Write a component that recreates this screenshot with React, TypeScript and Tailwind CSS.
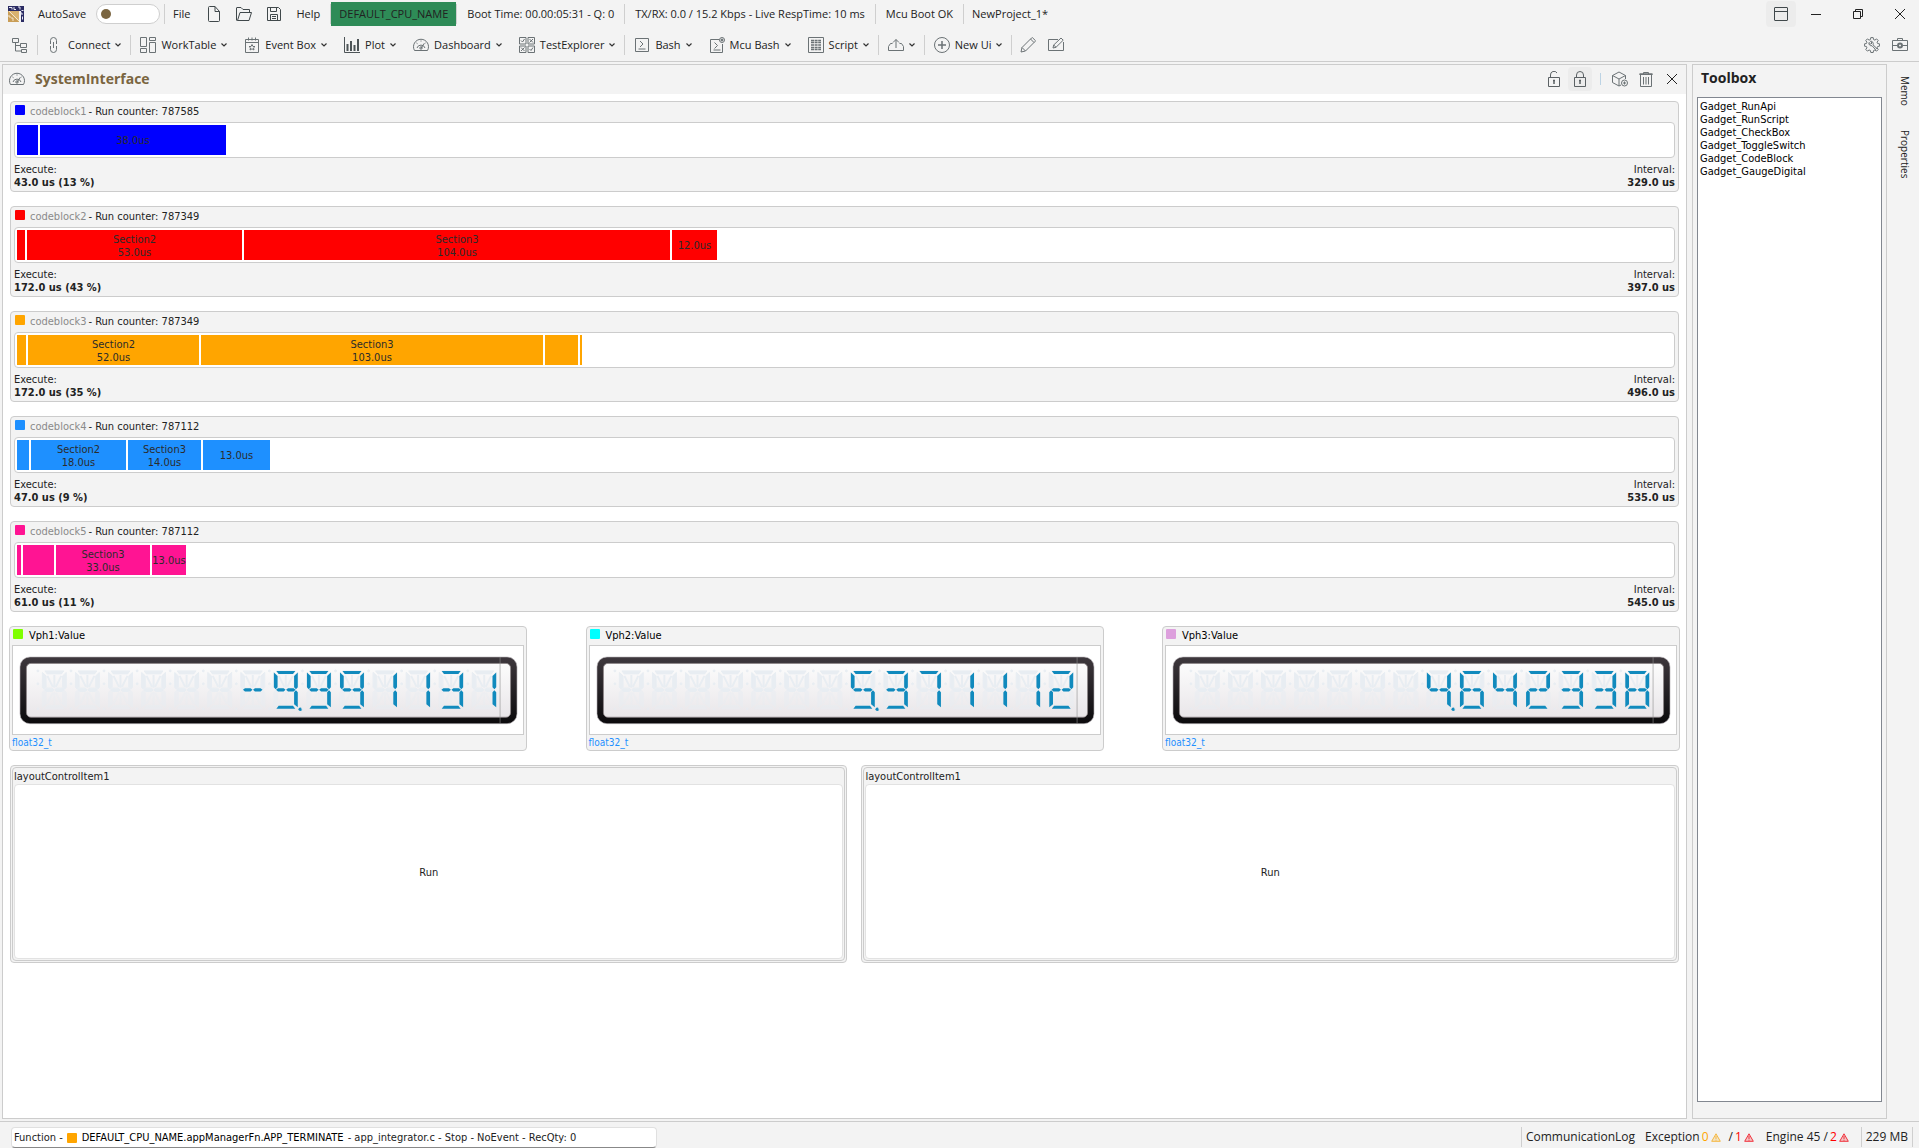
import React from 'react';

interface Section {
    span: number;
    name?: string;
    time?: string;
}

interface CodeBlock {
    name: string;
    counter: number;
    fill: string;
    execute: string;
    interval: string;
    sections: Section[];
}

interface GaugeData {
    name: string;
    fill: string;
    value: string;
}

const TRACK_SPAN = 1655;

const CODE_BLOCKS: CodeBlock[] = [
    {
        name: 'codeblock1', counter: 787585, fill: 'bg-[#0000ff]', execute: '43.0 us (13 %)', interval: '329.0 us',
        sections: [{ span: 21 }, { span: 186, time: '38.0us' }],
    },
    {
        name: 'codeblock2', counter: 787349, fill: 'bg-[#ff0000]', execute: '172.0 us (43 %)', interval: '397.0 us',
        sections: [{ span: 8 }, { span: 215, name: 'Section2', time: '53.0us' }, { span: 426, name: 'Section3', time: '104.0us' }, { span: 45, time: '12.0us' }],
    },
    {
        name: 'codeblock3', counter: 787349, fill: 'bg-[#ffa500]', execute: '172.0 us (35 %)', interval: '496.0 us',
        sections: [{ span: 9 }, { span: 171, name: 'Section2', time: '52.0us' }, { span: 342, name: 'Section3', time: '103.0us' }, { span: 33 }, { span: 2 }],
    },
    {
        name: 'codeblock4', counter: 787112, fill: 'bg-[#1e90ff]', execute: '47.0 us (9 %)', interval: '535.0 us',
        sections: [{ span: 12 }, { span: 95, name: 'Section2', time: '18.0us' }, { span: 73, name: 'Section3', time: '14.0us' }, { span: 67, time: '13.0us' }],
    },
    {
        name: 'codeblock5', counter: 787112, fill: 'bg-[#ff1493]', execute: '61.0 us (11 %)', interval: '545.0 us',
        sections: [{ span: 4 }, { span: 31 }, { span: 94, name: 'Section3', time: '33.0us' }, { span: 34, time: '13.0us' }],
    },
];

const GAUGES: GaugeData[] = [
    { name: 'Vph1:Value', fill: 'bg-[#7fff00]', value: '-9.991131' },
    { name: 'Vph2:Value', fill: 'bg-[#00ffff]', value: '5.371112' },
    { name: 'Vph3:Value', fill: 'bg-[#dda0dd]', value: '4.642338' },
];

const GADGETS = ['Gadget_RunApi', 'Gadget_RunScript', 'Gadget_CheckBox', 'Gadget_ToggleSwitch', 'Gadget_CodeBlock', 'Gadget_GaugeDigital'];

/* ---------- icons ---------- */

const Icon: React.FC<{ children: React.ReactNode; className?: string }> = ({ children, className = 'text-[#6b7275]' }) => (
    <svg viewBox="0 0 16 16" className={`size-4 shrink-0 ${className}`} fill="none" stroke="currentColor" strokeWidth="1" aria-hidden="true">
        {children}
    </svg>
);

const Logo = () => (
    <svg viewBox="0 0 16 16" className="size-4 shrink-0" aria-hidden="true">
        <path d="M0 0h16v16h-3V5H0z" fill="#2a2b63" />
        <path d="M0 5h11v11H0z" fill="#d9b26f" />
        <path d="M0 5l11 11H0z" fill="#c99d56" />
        <path d="M1 5l10 10M3 12h2v3M1 9v2h2" stroke="#f3e6cc" fill="none" />
        <path d="M1 1.500h3v2M6 1v2.500h2M10 1h2v2.500M13.500 4.500h2M12 7h2v2M14.500 10.500v3" stroke="#e8e8f4" fill="none" />
    </svg>
);

const TreeIcon = () => (
    <Icon><path d="M.5 1.500h6v4h-6zM8.500 6.500h6v4h-6zM9.500 12.500h5v3h-5zM3.500 5.500v8.500h6M3.500 8.500h5" /></Icon>
);
const LinkIcon = () => (
    <Icon><path d="M3.500 6V3.500a3 3 0 016 0V6M3.500 10v2.500a3 3 0 006 0V10M6.500 5v6M3.500 6v1M9.500 6v1M3.500 9v1M9.500 9v1" /></Icon>
);
const WorkTableIcon = () => (
    <Icon><path d="M.5.5h6v9h-6zM.5 11.500h6v4h-6zM9.500.5h6v3h-6zM9.500 5.500h6v10h-6z" /></Icon>
);
const EventIcon = () => (
    <Icon>
        <path d="M1.500 2.500h13v13h-13zM1.500 5.500h13M4.500.5v3M8 .5v3M11.500.5v3" />
        <path d="M8 7.500l1 2h2l-1.500 1.400.5 2.100-2-1.200L6 13l.5-2.100L5 9.500h2z" />
    </Icon>
);
const PlotIcon = () => (
    <Icon className="text-[#4d5457]">
        <path d="M.5 0v15.500H16" />
        <path d="M3.500 7v7M7 4v10M10.500 8v6M14 2v12" strokeWidth="2" />
    </Icon>
);
const GaugeIcon = () => (
    <Icon>
        <path d="M1.500 13.500a7.500 7.500 0 1113 0zM4 11a4.200 4.200 0 018 0M8 11.500l3-5" />
        <circle cx="8" cy="11" r="1.200" />
        <path d="M8 3.500v1M3.500 6l1 .7M12.500 6l-1 .7" />
    </Icon>
);
const TestIcon = () => (
    <Icon>
        <path d="M.5.5h6.500v6.500H.5zM9 .5h6.500v6.500H9zM.5 9h6.500v6.500H.5zM9 9h6.500v6.500H9z" />
        <path d="M2 3.500l1.500 1.500 2-3M10.500 2l3.500 3.500M14 2l-3.500 3.500M2 10.500L5.500 14M5.500 10.500L2 14M10.500 12l1.500 1.500 2-3" />
    </Icon>
);
const BashIcon = () => (
    <Icon><path d="M1.500 1.500h13v13h-13zM6 4l3 3-3 3M4.500 12h7" /></Icon>
);
const McuBashIcon = () => (
    <Icon>
        <path d="M10 2.500H1.500v13h12V7M5.500 5.500l3 3-3 3M4.500 13h7" />
        <circle cx="13" cy="3" r="2.500" />
        <circle cx="13" cy="3" r="1" fill="currentColor" />
    </Icon>
);
const ScriptIcon = () => (
    <Icon>
        <path d="M.5.5h15v15H.5z" />
        <path d="M3 3.500h10M3 5.500h10M3 8h10M3 10.500h10M3 12.500h10" strokeWidth="1.500" strokeDasharray="3 .6" />
    </Icon>
);
const ShareIcon = () => (
    <Icon><path d="M4.500 6.500H2.500l-2 3v4h15v-4l-2-3h-2M8 11V2.500M5 5.500l3-3 3 3" /></Icon>
);
const PlusIcon = () => (
    <Icon>
        <circle cx="8" cy="8" r="7.500" />
        <path d="M8 4v8M4 8h8" strokeWidth="1.500" />
    </Icon>
);
const PencilIcon = () => (
    <Icon><path d="M1 15l1-4.500L11.500 1l.8-.5 3.200 3.200-.5.800L5.500 14zM2 10.500L5.500 14M10.500 2l3.500 3.500" /></Icon>
);
const EditIcon = () => (
    <Icon><path d="M10 2.500H.5v11h15V5M5 11l.7-3L13 1l2.200 2.200L8 10.300zM5.700 8L8 10.300" /></Icon>
);
const GearIcon = () => (
    <Icon>
        <path d="M6.800.6h2.400l.4 2 1.300.5 1.700-1.200 1.600 1.600-1.100 1.700.5 1.300 2 .4v2.200l-2 .4-.5 1.300 1.100 1.700-1.600 1.600-1.700-1.100-1.300.5-.4 2H6.800l-.4-2-1.300-.5-1.700 1.100-1.600-1.600 1.100-1.700-.5-1.300-2-.4V6.900l2-.4.5-1.300-1.100-1.700 1.600-1.600 1.700 1.200 1.300-.5z" />
        <path d="M5 5.500a2.500 2.500 0 003 3.200l3.500 3.800 1.200-1.200L9 7.800a2.500 2.500 0 00-2.500-3.600L8 6 6.800 7.200z" />
    </Icon>
);
const CameraIcon = () => (
    <Icon>
        <path d="M.5 3.500h15v10H.5zM5.500 3.500v-2h5v2M.5 8.500h4.500M11 8.500h4.500" />
        <circle cx="8" cy="8.500" r="2" strokeWidth="2" />
    </Icon>
);
const FileIcon = () => (
    <Icon className="text-[#40484b]"><path d="M2.500 1.500a1 1 0 011-1H9l4.500 5v9a1 1 0 01-1 1h-9a1 1 0 01-1-1zM9 .5v5h4.500" /></Icon>
);
const FolderIcon = () => (
    <Icon className="text-[#40484b]"><path d="M1.500 14.500l2.500-8h11.500l-2.500 8zM1.500 14.500H1a.5.500 0 01-.5-.5V2a.5.500 0 01.5-.5h4l2 2h6.500v3" /></Icon>
);
const SaveIcon = () => (
    <Icon className="text-[#40484b]"><path d="M1.500 1.500h11l2 2v11h-13zM4.500 1.500v4h6v-4M4.500 14.500v-6h7v6M6 10.500h4M6 12.500h4" /></Icon>
);
const UnlockIcon = () => (
    <Icon className="text-[#5b6164]">
        <path d="M2.500 6.500h11v9h-11zM4.500 6.500V4a3.500 3.500 0 016.500-2" />
        <path d="M8 9v4M7 9.500h2" strokeWidth="1.500" />
    </Icon>
);
const LockIcon = () => (
    <Icon className="text-[#5b6164]">
        <path d="M2.500 6.500h11v9h-11zM4.500 6.500V4a3.500 3.500 0 017 0v2.500" />
        <path d="M8 9v4M7 9.500h2" strokeWidth="1.500" />
    </Icon>
);
const BoxIcon = () => (
    <Icon>
        <path d="M9 14l-2 1-6.500-3.500v-7L7 1l6.500 3.500V8M.5 4.500L7 8l6.500-3.500M7 8v7" />
        <circle cx="12.500" cy="12" r="3" />
        <path d="M12.500 10.500v3M11 12h3" />
    </Icon>
);
const TrashIcon = () => (
    <Icon>
        <path d="M1.500 3.500h13M5.500 3.500v-2h5v2M2.500 3.500v12h11v-12M5.500 6v7.500M8 6v7.500M10.500 6v7.500" />
        <path d="M1.500 3h13" strokeWidth="1.500" />
    </Icon>
);
const WindowIcon = () => (
    <Icon className="text-[#40484b]"><path d="M2 1.500h12a.5.500 0 01.5.5v12a.5.500 0 01-.5.500H2a.5.500 0 01-.5-.5V2a.5.500 0 01.5-.5zM1.500 5.500h13" /></Icon>
);
const MinimizeIcon = () => <Icon className="text-[#222]"><path d="M3 8.500h10" /></Icon>;
const RestoreIcon = () => (
    <Icon className="text-[#222]"><path d="M3.500 5.500h7v7h-7zM5.500 5.500v-2h7v7h-2" /></Icon>
);
const CloseIcon = () => <Icon className="text-[#222]"><path d="M3 3l10 10M13 3L3 13" /></Icon>;
const Chevron = () => (
    <svg viewBox="0 0 6 4" className="h-1 w-1.5 shrink-0 text-[#333]" fill="none" stroke="currentColor" strokeWidth="1.200" aria-hidden="true">
        <path d="M.5.500L3 3 5.500.5" />
    </svg>
);
const WarnIcon: React.FC<{ className: string }> = ({ className }) => (
    <svg viewBox="0 0 10 9" className={`h-[9px] w-2.5 shrink-0 ${className}`} fill="none" stroke="currentColor" aria-hidden="true">
        <path d="M5 .8L9.300 8.300H.7z" fill="currentColor" fillOpacity=".25" />
        <path d="M5 3v3M5 6.700v1" />
    </svg>
);

/* ---------- title bar and toolbar ---------- */

const Sep: React.FC = () => <span className="h-5 w-px shrink-0 bg-[#cfcfcf]" />;

const TitleBar: React.FC = () => (
    <header className="flex h-7 items-center pl-2">
        <Logo />
        <label htmlFor="autosave" className="ml-3.5">AutoSave</label>
        <input
            id="autosave"
            type="checkbox"
            role="switch"
            className="ml-2.5 flex h-5 w-16 shrink-0 appearance-none items-center rounded-full border border-[#cfcfcf] bg-white pl-1 before:size-2.5 before:rounded-full before:bg-[#7a6540] before:content-['']"
        />
        <div className="ml-1 flex items-center">
            <Sep />
            <button className="ml-2">File</button>
            <button aria-label="New" className="ml-4"><FileIcon /></button>
            <button aria-label="Open" className="ml-3.5"><FolderIcon /></button>
            <button aria-label="Save" className="ml-3.5"><SaveIcon /></button>
            <button className="mr-2.5 ml-3.5">Help</button>
            <Sep />
        </div>
        <span className="flex h-6 items-center bg-[#2e8b57] px-2">DEFAULT_CPU_NAME</span>
        <Sep />
        <span className="px-2.5">Boot Time: 00.00:05:31 - Q: 0</span>
        <Sep />
        <span className="px-2.5">TX/RX: 0.0 / 15.2 Kbps - Live RespTime: 10 ms</span>
        <Sep />
        <span className="px-2.5">Mcu Boot OK</span>
        <Sep />
        <span className="px-2">NewProject_1*</span>
        <div className="ml-auto flex items-center pr-[11px]">
            <button aria-label="Layout" className="mr-3 flex h-[26px] w-[30px] items-center justify-center rounded bg-[#ececec]"><WindowIcon /></button>
            <button aria-label="Minimize" className="mr-[26px]"><MinimizeIcon /></button>
            <button aria-label="Restore" className="mr-[26px]"><RestoreIcon /></button>
            <button aria-label="Close"><CloseIcon /></button>
        </div>
    </header>
);

const ToolButton: React.FC<{ icon: React.ReactNode; label?: string }> = ({ icon, label }) => (
    <button aria-label={label ? undefined : 'Share'} className="flex items-center">
        {icon}
        {label && <span className="ml-[5px]">{label}</span>}
        <span className="ml-[5px]"><Chevron /></span>
    </button>
);

const Group: React.FC<{ children: React.ReactNode }> = ({ children }) => (
    <div className="flex items-center gap-[17px] px-[9px]">{children}</div>
);

const Toolbar: React.FC = () => (
    <nav className="flex h-[34px] items-center border-b border-[#cccccc] pl-[3px]">
        <Group><button aria-label="Tree"><TreeIcon /></button></Group>
        <Sep />
        <Group><ToolButton icon={<LinkIcon />} label="Connect" /></Group>
        <Sep />
        <Group>
            <ToolButton icon={<WorkTableIcon />} label="WorkTable" />
            <ToolButton icon={<EventIcon />} label="Event Box" />
            <ToolButton icon={<PlotIcon />} label="Plot" />
            <ToolButton icon={<GaugeIcon />} label="Dashboard" />
            <ToolButton icon={<TestIcon />} label="TestExplorer" />
        </Group>
        <Sep />
        <Group>
            <ToolButton icon={<BashIcon />} label="Bash" />
            <ToolButton icon={<McuBashIcon />} label="Mcu Bash" />
            <ToolButton icon={<ScriptIcon />} label="Script" />
        </Group>
        <Sep />
        <Group><ToolButton icon={<ShareIcon />} /></Group>
        <Sep />
        <Group><ToolButton icon={<PlusIcon />} label="New Ui" /></Group>
        <Sep />
        <div className="flex items-center gap-3 pl-2">
            <button aria-label="Pencil"><PencilIcon /></button>
            <button aria-label="Edit"><EditIcon /></button>
        </div>
        <div className="ml-auto flex items-center gap-3 pr-[11px]">
            <button aria-label="Settings"><GearIcon /></button>
            <button aria-label="Snapshot"><CameraIcon /></button>
        </div>
    </nav>
);

/* ---------- dashboard ---------- */

const Swatch: React.FC<{ fill: string }> = ({ fill }) => <span className={`size-2.5 shrink-0 rounded-[1px] ${fill}`} />;

const CodeBlockCard: React.FC<{ block: CodeBlock }> = ({ block }) => (
    <section className="rounded border border-[#cccccc] bg-[#f3f3f3] px-[3px] pb-0.5">
        <div className="flex h-5 items-baseline pt-0.5 pl-px">
            <Swatch fill={block.fill} />
            <span className="ml-[5px] text-[#8a8a8a]">{block.name}</span>
            <span className="ml-0.5">- Run counter: {block.counter}</span>
        </div>
        <div className="flex h-9 gap-0.5 rounded border border-[#cccccc] bg-white px-0.5 py-0.5">
            {block.sections.map((section, index) => (
                <div
                    key={index}
                    className={`flex h-[30px] flex-col items-center justify-center overflow-hidden pt-px leading-[13px] whitespace-nowrap text-[#2b2b2b] ${block.fill}`}
                    style={{ width: `${(section.span / TRACK_SPAN) * 100}%` }}
                >
                    {section.name && <span>{section.name}</span>}
                    {section.time && <span>{section.time}</span>}
                </div>
            ))}
        </div>
        <div className="flex justify-between pt-[5px] leading-[13px]">
            <div>
                <div>Execute:</div>
                <div className="font-bold">{block.execute}</div>
            </div>
            <div className="text-right">
                <div>Interval:</div>
                <div className="font-bold">{block.interval}</div>
            </div>
        </div>
    </section>
);

/* seven-segment shapes on a 24 x 38 cell */
const SEGMENTS: Record<string, string> = {
    a: 'M2.500 0H21.500L19.200 3H4.800z',
    b: 'M24 1.500V16.500L22.200 18.500 20.300 16.500V5z',
    c: 'M22.200 19.500L24 21.500V36.500L20.300 33.500V21.500z',
    d: 'M4.800 35H19.200L21.500 38H2.500z',
    e: 'M1.800 19.500L3.700 21.500V33.500L0 36.500V21.500z',
    f: 'M0 1.500L3.700 5V16.500L1.800 18.500 0 16.500z',
    g: 'M2.200 19L4.200 17.300H9.800L11.700 19 9.800 20.700H4.200zM12.300 19L14.200 17.300H19.800L21.800 19 19.800 20.700H14.200z',
};

const DIGITS: Record<string, string> = {
    '-': 'g', '1': 'bc', '2': 'abged', '3': 'abgcd', '4': 'fgbc', '5': 'afgcd', '6': 'afgcde', '7': 'abc', '8': 'abcdefg', '9': 'abcdfg',
};

const CELLS = 14;
const PITCH = 33.2;

const GaugeDisplay: React.FC<{ id: string; value: string }> = ({ id, value }) => {
    const chars = value.replace('.', '').split('');
    const dotAfter = value.indexOf('.') - 1;
    const first = CELLS - chars.length;
    return (
        <svg viewBox="0 0 512 88" className="block w-full" role="img" aria-label={value}>
            <defs>
                <linearGradient id={`${id}-frame`} x1="0" y1="0" x2="0" y2="1">
                    <stop offset="0" stopColor="#3e383d" />
                    <stop offset="1" stopColor="#0b0a0c" />
                </linearGradient>
                <linearGradient id={`${id}-face`} x1="0" y1="0" x2="0" y2="1">
                    <stop offset="0" stopColor="#fcfcfc" />
                    <stop offset="1" stopColor="#e9e6e9" />
                </linearGradient>
            </defs>
            <rect x="7" y="11" width="499" height="67" rx="10" fill={`url(#${id}-frame)`} stroke="#bdb9bd" strokeWidth=".6" />
            <rect x="13.500" y="17.500" width="486" height="54" rx="4.500" fill={`url(#${id}-face)`} stroke="#8d8588" strokeWidth=".8" />
            {Array.from({ length: CELLS }, (_, i) => (
                <g key={i} transform={`translate(${29.5 + i * PITCH} 25)`}>
                    <g fill="#e8edf2" stroke="#e8edf2">
                        <path d={SEGMENTS.a + SEGMENTS.b + SEGMENTS.f + SEGMENTS.g} />
                        <path d="M5 5L10.500 16M12 4V17M19 5L13.500 16" strokeWidth="2" />
                        <path d={SEGMENTS.c + SEGMENTS.d + SEGMENTS.e} opacity=".5" />
                        <path d="M10.500 22L5 33M12 21V34M13.500 22L19 33" strokeWidth="2" opacity=".4" />
                        <circle cx="-4.500" cy="0" r="1" />
                        <circle cx="-4.500" cy="13" r="1" />
                        <circle cx="-4.500" cy="38" r="1" opacity=".6" />
                    </g>
                    {i >= first && (
                        <path
                            d={DIGITS[chars[i - first]].split('').map((s) => SEGMENTS[s]).join('')}
                            fill="#118abd"
                        />
                    )}
                    {i >= first && i - first === dotAfter && <circle cx="26.500" cy="38.500" r="1.800" fill="#118abd" />}
                </g>
            ))}
            <path d="M489 11v67" stroke="#8f8f8f" strokeOpacity=".6" />
        </svg>
    );
};

const GaugeCard: React.FC<{ gauge: GaugeData }> = ({ gauge }) => (
    <section className="w-[31%] rounded border border-[#cccccc] bg-[#f3f3f3] px-0.5">
        <div className="flex h-[18px] items-baseline gap-1.5 pt-px pl-px text-black">
            <Swatch fill={gauge.fill} />
            <span>{gauge.name}</span>
        </div>
        <div className="border border-[#cccccc] bg-white">
            <GaugeDisplay id={gauge.name.slice(0, 4)} value={gauge.value} />
        </div>
        <div className="h-[15px] text-[10px] leading-[16px] text-[#1e90ff]">float32_t</div>
    </section>
);

const RunPanel: React.FC<{ className: string }> = ({ className }) => (
    <section className={`min-w-0 rounded border border-[#cccccc] bg-[#f3f3f3] p-px ${className}`}>
        <div className="rounded border border-[#cccccc] p-px">
            <div className="h-[15px] leading-[15px]">layoutControlItem1</div>
            <button className="block h-[175px] w-full rounded border border-[#e2e2e2] bg-white pt-1">Run</button>
        </div>
    </section>
);

const SystemInterface: React.FC = () => (
    <main className="flex flex-1 flex-col border border-[#cccccc] bg-white">
        <div className="flex h-[29px] items-center bg-[#f3f3f3] px-1.5 pb-0.5 font-['Open_Sans',sans-serif]">
            <GaugeIcon />
            <h1 className="ml-2.5 text-[14px] font-bold text-[#7a6540]">SystemInterface</h1>
            <div className="ml-auto flex items-center">
                <button aria-label="Unlock" className="mr-1.5"><UnlockIcon /></button>
                <button aria-label="Lock" className="mr-2 flex size-6 items-center justify-center rounded bg-[#ececec]"><LockIcon /></button>
                <span className="mr-[11px] h-3 w-px bg-[#bcd3e4]" />
                <button aria-label="Add gadget" className="mr-2.5"><BoxIcon /></button>
                <button aria-label="Delete" className="mr-2.5"><TrashIcon /></button>
                <button aria-label="Close panel"><CloseIcon /></button>
            </div>
        </div>
        <div className="flex flex-col gap-3.5 p-[7px]">
            {CODE_BLOCKS.map((block) => <CodeBlockCard key={block.name} block={block} />)}
            <div className="-mx-px flex justify-between">
                {GAUGES.map((gauge) => <GaugeCard key={gauge.name} gauge={gauge} />)}
            </div>
            <div className="flex gap-3.5">
                <RunPanel className="grow-[838] basis-0" />
                <RunPanel className="grow-[818] basis-0" />
            </div>
        </div>
    </main>
);

/* ---------- side and status ---------- */

const Toolbox: React.FC = () => (
    <aside className="flex w-[195px] shrink-0 flex-col border border-[#cccccc] px-1 pb-4">
        <h2 className="flex h-8 items-center pb-1.5 pl-1 font-['Open_Sans',sans-serif] text-[14px] font-bold">Toolbox</h2>
        <ul className="flex-1 border border-[#828790] bg-white px-0.5 py-0.5 leading-[13px] text-black">
            {GADGETS.map((gadget) => <li key={gadget}>{gadget}</li>)}
        </ul>
    </aside>
);

const StatusBar: React.FC = () => (
    <footer className="flex h-[27px] items-center border-t border-[#cccccc] pl-[11px]">
        <div className="mt-[5px] flex h-[21px] w-[646px] items-center rounded border border-[#e0e0e0] border-b-[#888888] bg-white pl-0.5 font-['DejaVu_Sans_Condensed','DejaVu_Sans',sans-serif] whitespace-pre">
            <span>Function -</span>
            <span className="mr-[5px] ml-1 flex"><Swatch fill="bg-[#ffa500]" /></span>
            <span className="text-black">DEFAULT_CPU_NAME.appManagerFn.APP_TERMINATE</span>
            <span className="ml-px"> - app_integrator.c - Stop - NoEvent - RecQty: 0</span>
        </div>
        <div className="ml-auto flex items-center pt-1 text-[12px]">
            <Sep />
            <span className="ml-1">CommunicationLog</span>
            <span className="ml-2.5">Exception</span>
            <span className="ml-0.5 text-[#ffa500]">0</span>
            <span className="mr-2 ml-0.5"><WarnIcon className="text-[#f5b740]" /></span>
            <span>/</span>
            <span className="ml-0.5 text-[#ff0000]">1</span>
            <span className="ml-0.5"><WarnIcon className="text-[#f0323c]" /></span>
            <span className="ml-3">Engine 45 /</span>
            <span className="ml-0.5 text-[#ff0000]">2</span>
            <span className="mr-3 ml-0.5"><WarnIcon className="text-[#f0323c]" /></span>
            <Sep />
            <span className="mx-1">229 MB</span>
            <Sep />
            <span className="w-1.5" />
        </div>
    </footer>
);

export default function App() {
    return (
        <div className="flex min-h-screen flex-col bg-[#f3f3f3] font-['Open_Sans',sans-serif] text-[11px] leading-4 whitespace-nowrap text-[#222222]">
            <TitleBar />
            <Toolbar />
            <div className="flex flex-1 gap-[5px] py-0.5 pl-0.5 font-['DejaVu_Sans_Condensed','DejaVu_Sans',sans-serif]">
                <SystemInterface />
                <Toolbox />
                <div className="flex w-[27px] shrink-0 flex-col items-center gap-6 pt-3 pr-0.5 font-['Open_Sans',sans-serif] text-[10px]">
                    <button className="[writing-mode:vertical-rl]">Memo</button>
                    <button className="[writing-mode:vertical-rl]">Properties</button>
                </div>
            </div>
            <StatusBar />
        </div>
    );
}
